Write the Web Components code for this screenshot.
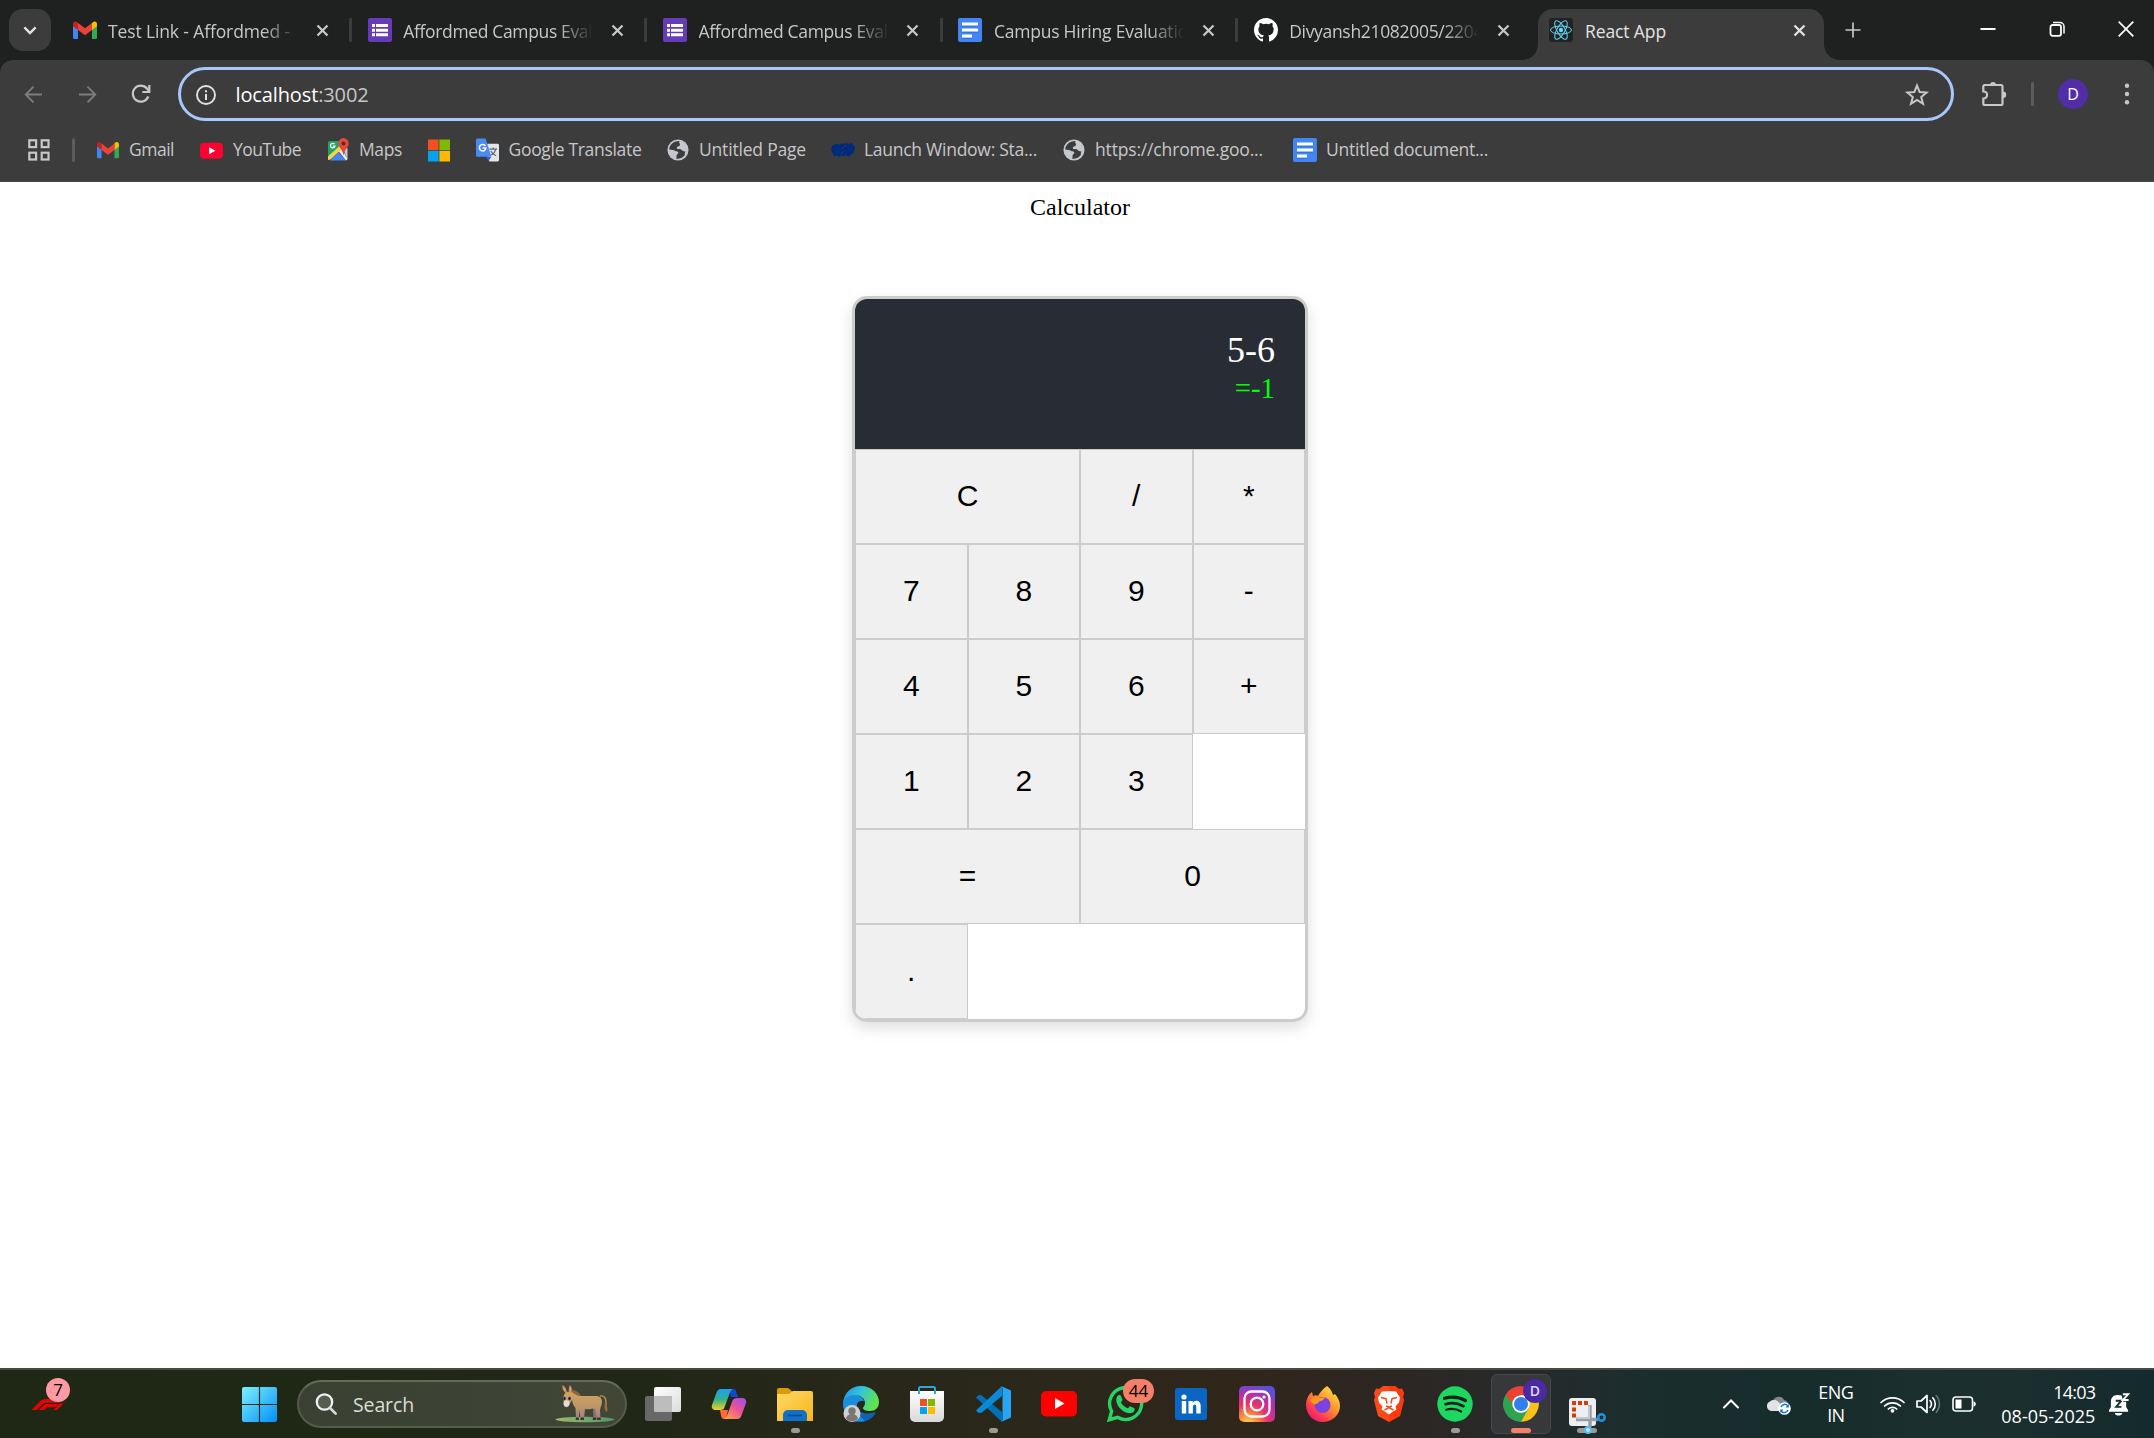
<!DOCTYPE html>
<html lang="en">
<head>
<meta charset="utf-8">
<title>React App</title>
<style>
html,body{margin:0;height:1438px;overflow:hidden;background:#fff}
body{display:flex;flex-direction:column;width:2154px;font-family:"Open Sans","Noto Sans",sans-serif}
calc-page{flex:1}
</style>
</head>
<body>
<tab-strip>
  <browser-tab icon="gmail" w="182">Test Link - Affordmed -</browser-tab>
  <browser-tab icon="forms" w="189">Affordmed Campus Eval</browser-tab>
  <browser-tab icon="forms" w="189">Affordmed Campus Eval</browser-tab>
  <browser-tab icon="docs" w="194">Campus Hiring Evaluatio</browser-tab>
  <browser-tab icon="github" w="194" last>Divyansh21082005/2204</browser-tab>
  <browser-tab icon="react" w="81" active>React App</browser-tab>
</tab-strip>
<tool-bar></tool-bar>
<bookmarks-bar></bookmarks-bar>
<calc-page></calc-page>
<task-bar></task-bar>

<script>
const GMAIL='<path fill="#4285f4" d="M0 4v12.5A1.5 1.5 0 0 0 1.5 18H5V7z"/><path fill="#34a853" d="M24 4v12.5a1.5 1.5 0 0 1-1.5 1.5H19V7z"/><path fill="#fbbc04" d="M19 2v7l5-3.800V3c0-2.700-2.900-3.700-5-1z"/><path fill="#c5221f" d="M0 3v2.200L5 9V2C3-.7 0 .3 0 3z"/><path fill="#ea4335" d="M5 2v7l7 5.300L19 9V2l-7 5.300z"/>';
const CLOSE='<path d="M2 2l8 8M10 2l-8 8" stroke="currentColor" stroke-width="1.800" fill="none"/>';
const GLOBE='<circle cx="12" cy="12" r="11.500" fill="#c4c7cc"/><path fill="#3c3c3c" d="M2.500 11.500c3 .2 5 .5 6.500 1.500 1.400 1 3.200.2 3.400 1.800.2 1.700-1.900 1.800-2 3.200-.1 1.200.2 2.400-.4 3.500 3.500.5 6.500-.6 8.800-3.100 1.200-1.400.2-3.400 1.400-4.900-2.200.3-3.700-1-5.200-2.300-1.700-.5-3.500.5-4.300-1-.6-1.400.9-2.200 2-2.400 1.700-.4 1.800-2.300.9-3.300-.6-.8-.3-1.800.3-2.200C8.500 2 2.500 5.500 2.500 11.500z"/>';
const DOCS='<rect width="24" height="24" rx="2" fill="#4285f4"/><path fill="#fff" d="M4 4.500h16v3.200H4zM4 10.500h16v3.200H4zM4 16.600h10v3.200H4z"/><path d="M4 8.200h16M4 14.200h16M4 20.300h10" stroke="#2f6fdf"/>';
const YT='<rect y="4" width="24" height="16.500" rx="4" fill="#f03"/><path fill="#fff" d="M9.500 8.500v7.500l6.500-3.750z"/>';
const ICONS={
 gmail:['0 -3 24 24',GMAIL],
 x:['0 0 12 12',CLOSE],
 forms:['0 0 24 24','<rect width="24" height="24" rx="2" fill="#673ab7"/><path fill="#fff" d="M4 6h3v3H4zM8 6h12v3H8zM4 10.700h3v3H4zM8 10.700h12v3H8zM4 15.300h3v3H4zM8 15.300h12v3H8z"/>'],
 docs:['0 0 24 24',DOCS],
 github:['0 0 16 16','<path fill="#fff" d="M8 0C3.580 0 0 3.580 0 8c0 3.540 2.290 6.530 5.470 7.590.4.070.55-.17.55-.38 0-.19-.01-.82-.01-1.490-2.010.37-2.530-.49-2.690-.94-.09-.23-.48-.94-.82-1.130-.28-.15-.68-.52-.01-.53.63-.01 1.080.58 1.230.82.72 1.210 1.870.87 2.330.66.070-.52.280-.87.510-1.070-1.780-.2-3.640-.89-3.640-3.950 0-.87.310-1.590.820-2.150-.08-.2-.36-1.020.08-2.120 0 0 .67-.21 2.200.82a7.600 7.600 0 0 1 4 0c1.530-1.040 2.200-.82 2.200-.82.44 1.100.16 1.920.08 2.120.51.56.82 1.270.82 2.150 0 3.070-1.870 3.750-3.650 3.950.29.25.54.73.54 1.480 0 1.070-.01 1.930-.01 2.200 0 .21.15.46.55.38A8.010 8.010 0 0 0 16 8c0-4.420-3.580-8-8-8z"/>'],
 react:['0 0 24 24','<rect width="24" height="24" rx="3" fill="#222"/><g fill="none" stroke="#61dafb" stroke-width="1"><ellipse cx="12" cy="12" rx="10.500" ry="4"/><ellipse cx="12" cy="12" rx="10.500" ry="4" transform="rotate(60 12 12)"/><ellipse cx="12" cy="12" rx="10.500" ry="4" transform="rotate(120 12 12)"/></g><circle cx="12" cy="12" r="2.200" fill="#61dafb"/>'],
 down:['0 0 12 12','<path d="M1.200 3.800L6 8.600l4.800-4.800" stroke="currentColor" stroke-width="2" fill="none"/>'],
 plus:['0 0 16 16','<path d="M8 .5v15M.5 8h15" stroke="currentColor" stroke-width="1.700"/>'],
 min:['0 0 16 16','<path d="M.5 8h15" stroke="#fff" stroke-width="2"/>'],
 restore:['0 0 16 16','<rect x="1.500" y="4" width="10.500" height="10.800" rx="2" fill="none" stroke="#fff" stroke-width="1.800"/><path d="M4 1.500h7A4 4 0 0 1 15 5.500v7" fill="none" stroke="#fff" stroke-width="1.500"/>'],
 wclose:['0 0 16 16','<path d="M.7.7l14.600 14.600M15.300.7L.7 15.300" stroke="#fff" stroke-width="1.700"/>'],
 back:['0 0 20 20','<path d="M19 10H2.500M10 1.800L1.800 10l8.200 8.200" fill="none" stroke="currentColor" stroke-width="1.900"/>'],
 fwd:['0 0 20 20','<path d="M1 10h16.500M10 1.800l8.200 8.200-8.200 8.200" fill="none" stroke="currentColor" stroke-width="1.900"/>'],
 reload:['0 0 20 20','<path d="M17.300 12.500a8 8 0 1 1-1.300-8L18 7" fill="none" stroke="currentColor" stroke-width="2.200"/><path d="M18.300 1v7h-7" fill="none" stroke="currentColor" stroke-width="2.200"/>'],
 info:['0 0 20 20','<circle cx="10" cy="10" r="9" fill="none" stroke="currentColor" stroke-width="1.900"/><path d="M10 9v6M10 5.300v2" stroke="currentColor" stroke-width="2"/>'],
 star:['0 0 24 24','<path d="M12 2.500l2.600 6.500 7 .5-5.400 4.500 1.800 6.800-6-3.800-6 3.800 1.800-6.800L2.400 9.500l7-.5z" fill="none" stroke="currentColor" stroke-width="2"/>'],
 puzzle:['0 0 26 26','<path d="M4 4h16a1.500 1.500 0 0 1 1.500 1.500v17A1.500 1.500 0 0 1 20 24H3.800a1.500 1.500 0 0 1-1.500-1.500V17.500c5 0 5-7 0-7V5.500A1.500 1.500 0 0 1 4 4z" fill="none" stroke="currentColor" stroke-width="2.200"/><path d="M9 4a3 3 0 0 1 6 0zM22 10.500a3 3 0 0 1 0 6.500z" fill="currentColor"/>'],
 dots:['0 0 8 24','<circle cx="4" cy="3.800" r="2.200" fill="currentColor"/><circle cx="4" cy="12" r="2.200" fill="currentColor"/><circle cx="4" cy="20.200" r="2.200" fill="currentColor"/>'],
 apps:['0 0 22 22','<g fill="none" stroke="#c7c7c7" stroke-width="2.200"><rect x="1.300" y="1.300" width="6.800" height="6.800"/><rect x="13.700" y="1.300" width="6.800" height="6.800"/><rect x="1.300" y="13.700" width="6.800" height="6.800"/><rect x="13.700" y="13.700" width="6.800" height="6.800"/></g>'],
 youtube:['0 0 24 24',YT],
 maps:['0 0 22 24','<path fill="#1fa463" d="M2.500 3H15L14 11 2 21.500a1.500 1.500 0 0 1-1-1.500V4.500A1.500 1.500 0 0 1 2.500 3z"/><path fill="#fbd14b" d="M1 18.500L13.500 7l2.500 3L3.500 21.500 1 22z"/><path fill="#4285f4" d="M3 22.500l8.500-8.200L19 22.500z"/><path fill="#e6e8ea" d="M11.800 13.500l3-2.500 5.700 9.500a2 2 0 0 1-1.500 2z"/><path fill="#c3c8cd" d="M16 11l4.500-1v11z"/><path fill="#dd4b3e" d="M16.500 0a5.300 5.300 0 0 0-5.200 5.500c0 4 4.200 5 5.200 12 1-7 5.200-8 5.200-12A5.300 5.300 0 0 0 16.500 0z"/><circle cx="16.500" cy="5.400" r="2" fill="#7c1d17"/><path d="M7.600 6.200A2.300 2.300 0 1 0 8 8.200H5.800" fill="none" stroke="#fff" stroke-width="1.300"/>'],
 ms:['0 0 24 24','<path fill="#f25022" d="M0 0h11.600v11.600H0z"/><path fill="#7fba00" d="M12.400 0H24v11.600H12.400z"/><path fill="#00a4ef" d="M0 12.400h11.600V24H0z"/><path fill="#ffb900" d="M12.400 12.400H24V24H12.400z"/>'],
 translate:['0 0 24 24','<path fill="#e3e5e8" d="M9 5.500h13.500A1.500 1.500 0 0 1 24 7v15.500a1.500 1.500 0 0 1-1.500 1.500H14z"/><path d="M14 11h8M18 9.500V11M20.500 11c-.5 3-3 5.500-5.500 6.500M15.500 13c1 2.200 3 4 5.500 5" stroke="#5f6b78" stroke-width="1.300" fill="none"/><path fill="#3a5bbf" d="M10 19h6l-3 4.500z"/><path fill="#4a8af4" d="M1.500 0H10l6 19H1.500A1.500 1.500 0 0 1 0 17.500v-16A1.500 1.500 0 0 1 1.500 0z"/><path d="M9.800 7.800A3.400 3.400 0 1 0 10.300 10H7" fill="none" stroke="#fff" stroke-width="1.500"/>'],
 globe:['0 0 24 24',GLOBE],
 launch:['0 0 24 14','<path fill="#002b7a" d="M0 7l1-4 4-2.500 2.500 1.200L12 .3l1 .7L15.500 0l1.500 1L21 0l3 4-1 5-5 4.500-3-1-3 .5-1-.5L8 14l-2-1.500-3 .5z"/><path stroke="#3c3c3c" stroke-width=".9" d="M10.500 6.500L15 2M9.500 11.500l4-4" fill="none"/>'],
 f1:['0 0 35 12','<path fill="#e10600" d="M0 12L9 3c2-2 3.500-3 7-3h19L31 4H17c-2.500 0-3.500.5-5 2l-6 6z"/><path fill="#e10600" d="M8 12l5-5c1-1 2-1.500 4-1.500h13L26.500 9H19c-1.500 0-2 .2-3 1l-2 2zM24 12l7-7h4l-7 7z"/>'],
 win:['0 0 35 35','<defs><linearGradient id="g" x2="1" y2="1"><stop stop-color="#7df0ff"/><stop offset="1" stop-color="#0090f8"/></linearGradient></defs><path fill="url(#g)" d="M2 0h14.900v16.900H0V2a2 2 0 0 1 2-2zM18.100 0H33a2 2 0 0 1 2 2v14.900H18.100zM0 18.100h16.900V35H2a2 2 0 0 1-2-2zM18.100 18.100H35V33a2 2 0 0 1-2 2H18.100z"/>'],
 search:['0 0 22 22','<circle cx="9.500" cy="9" r="7.700" fill="#6b6f62" fill-opacity=".6" stroke="#f1f1f1" stroke-width="2.300"/><path d="M15 15l5.700 5.700" stroke="#d8dae0" stroke-width="2.600" stroke-linecap="round"/>'],
 donkey:['0 0 60 38','<defs><linearGradient id="b" x2="0" y2="1"><stop stop-color="#d3a45c"/><stop offset=".55" stop-color="#bd9668"/><stop offset="1" stop-color="#9a8084"/></linearGradient><linearGradient id="l" x2="1"><stop stop-color="#9dba68"/><stop offset="1" stop-color="#4f9670"/></linearGradient></defs><ellipse cx="30" cy="34.500" rx="29.500" ry="2.800" fill="url(#l)"/><path d="M45 11c6-1 6 4 6 10" fill="none" stroke="#c08c4c" stroke-width="1.400"/><path fill="#a66a35" d="M50 18c2 2 3 5 2 9-3-2-3-6-2-9z"/><path fill="#8a7278" d="M25 22h4v12h-3.500zM38 21h4v13h-3.500z"/><path fill="url(#b)" d="M18 6c3 3 5 5 9 5h14c4 0 6 2 6 6 0 3-1.500 5-2 8l.5 9H42l-1.500-9c-.5-1-1-1.500-2-1.500-4 1-6 1-8.500.5L29 34h-3.500l-1-9c0 3-.5 6-1 9H21l-.5-11c-2-2-3-5-3.500-8-1 2-2.500 4-4 6.500-1.500 1.500-4 .5-4-1.500 0-3-.5-4-.5-7 0-3 1-5 3-6z"/><path fill="#c08f5c" d="M10.500 8C8 6 7 3 7.500 0 10 1.500 11.500 4 12 7.500zM14 7c-.6-3 0-5 .8-7C17 2 17.500 5 16.500 8z"/><path fill="#ee9886" d="M10.700 6.500C9 5 8.300 3.500 8.200 1.700c1.500 1.300 2.400 3 2.500 4.800zM15 6c-.3-2 0-3.300.4-4.500 1 1.500 1 3 .4 4.500z"/><path fill="#8d6238" d="M16.500 4.500c4 .5 8 3 9.500 6.500-3 0-6-1.500-9-4z"/><ellipse cx="11.500" cy="18.500" rx="3" ry="3.300" fill="#e8dbd4"/><ellipse cx="9.600" cy="13.500" rx="1.100" ry="1.700" fill="#1d1f74"/><ellipse cx="14.500" cy="13.500" rx="1.300" ry="1.800" fill="#1d1f74"/><path fill="#46302c" d="M20.800 32.500h3V35h-3zM25.500 32.500H29V35h-3.500zM37.800 32.500h3.400V35h-3.400zM42.200 32.500h3.500V35h-3.500z"/>'],
 taskview:['0 0 36 34','<defs><linearGradient id="w" x2="1" y2="1"><stop stop-color="#fff"/><stop offset="1" stop-color="#dcdcdc"/></linearGradient></defs><rect y="9" width="27" height="25" rx="2" fill="#686868"/><rect x="9" width="27" height="25" rx="2" fill="url(#w)"/><path fill="#bdbdbd" d="M9 9h18v16H11a2 2 0 0 1-2-2z"/>'],
 copilot:['0 0 34 30','<defs><linearGradient id="a" x2="0" y2="1"><stop stop-color="#1aa0f5"/><stop offset=".5" stop-color="#37b08c"/><stop offset="1" stop-color="#f5cf1c"/></linearGradient><linearGradient id="c" x1="1" x2=".2" y2="1"><stop stop-color="#9a4df0"/><stop offset=".5" stop-color="#e8509a"/><stop offset="1" stop-color="#ff9a4a"/></linearGradient></defs><path fill="#1546cf" d="M17 0h4c3 0 3 2 4 5l1.500 3H19z"/><path fill="url(#a)" d="M9 0h12c-2 1-3 3-4 6l-4 11c-1 3-2 4-5 4H4c-3 0-5-2-4-5l4-11c1-3 2-5 5-5z"/><path fill="#ff6a3a" d="M8 21h8l-2 9h-2c-3 0-3-4-4-9z"/><path fill="url(#c)" d="M25 30H12c2-1 3-3 4-6l4-11c1-3 2-4 5-4h5c3 0 5 2 4 5l-4 11c-1 3-2 5-5 5z"/>'],
 folder:['0 0 36 33','<defs><linearGradient id="a" x2="1" y2="1"><stop stop-color="#ffd968"/><stop offset="1" stop-color="#f7b51c"/></linearGradient></defs><path fill="#dc9b06" d="M0 2a2 2 0 0 1 2-2h9l5 4v6H0z"/><path fill="url(#a)" d="M0 6h12l4-3h18a2 2 0 0 1 2 2v28H0z"/><path fill="#1270c8" d="M6 33v-6a5 5 0 0 1 5-5h14a5 5 0 0 1 5 5v6z"/><path stroke="#0a4a92" stroke-width="1.600" d="M11 27.500h14"/>'],
 edge:['0 0 36 36','<defs><linearGradient id="a" x2="1" y2=".4"><stop stop-color="#1b8fe8"/><stop offset=".5" stop-color="#33c4dc"/><stop offset="1" stop-color="#60e34f"/></linearGradient></defs><path fill="#0f63b5" d="M0 17c1-7 8-10 14-8 3 1 6 3 7 6-5-1-8 2-7 6 1 6 10 8 19 5-3 7-10 10-17 10C6 36 0 28 0 17z"/><path fill="#1b8ddb" d="M0 17c1-7 8-10 14-8 3 1 6 3 7 6-5-1-8 2-7 6 0 5 4 10 8 14C8 38 0 28 0 17z"/><path fill="url(#a)" d="M0 17C1 7 8 0 18 0c11 0 18 8 18 16 0 6-4 9-9 9-4 0-7-1-7-3 0-1 2-2 2-5 0-5-5-8-10-8C6 9 1 12 0 17z"/><circle cx="9" cy="27.500" r="8.500" fill="#d2d0ce"/><circle cx="9" cy="25" r="3.700" fill="#7a7672"/><path fill="#7a7672" d="M3 33a5.500 4.500 0 0 1 12 0 9 9 0 0 1-12 0z"/>'],
 store:['0 0 36 36','<defs><linearGradient id="a" x2="0" y2="1"><stop stop-color="#fff"/><stop offset="1" stop-color="#d9d9d9"/></linearGradient></defs><path fill="url(#a)" d="M1 5h34v26a5 5 0 0 1-5 5H6a5 5 0 0 1-5-5z"/><path d="M10 8V2.500A1.500 1.500 0 0 1 11.500 1h13A1.500 1.500 0 0 1 26 2.500V8" fill="none" stroke="#2ba9dc" stroke-width="2"/><path fill="#f25022" d="M11 13h7v7h-7z"/><path fill="#7fba00" d="M19 13h7v7h-7z"/><path fill="#00a4ef" d="M11 21h7v7h-7z"/><path fill="#ffb900" d="M19 21h7v7h-7z"/>'],
 vscode:['0 0 36 36','<path fill="#0070b8" d="M1 11.500L3.500 9l3 .2L27 26v10z"/><path fill="#0a8bd8" d="M1 24.500L3.500 27l3-.2L27 10V0z"/><path fill="#27a4f2" d="M26 0l10 4.500v27L26 36c1.500-1 1.500-2 1.500-3V3c0-1 0-2-1.500-3z"/>'],
 ytbig:['0 0 36 26','<rect width="36" height="25.500" rx="5" fill="#f00"/><path fill="#fff" d="M14 7v11l9.500-5.500z"/>'],
 whatsapp:['0 0 36 36','<path fill="none" stroke="#25d366" stroke-width="3.400" d="M2.300 33.700l2.300-8.500A16 16 0 1 1 10.500 31.300z"/><path fill="#25d366" d="M12 9c1 0 1.500 0 2 1l1.500 3.500c.3 1-1.500 2.300-1.500 3 1.500 3 4 4.700 6.500 5.700 1 .2 2-2.200 2.800-2l4 2c.8.600.3 3-1 4-2.300 1.700-6 1.200-9.300-.7C13 23.500 8 17 9.500 12c.4-1.500 1.500-3 2.500-3z"/>'],
 linkedin:['0 0 32 32','<rect width="32" height="32" rx="2.500" fill="#0a66c2"/><circle cx="9" cy="9" r="2.600" fill="#fff"/><path fill="#fff" d="M6.800 13h4.400v12.500H6.800zM13.500 13h4.200v1.800c2-3.300 8-2.800 8 3.200v7.500h-4.400v-6.500c0-3.500-3.400-3-3.400 0v6.500h-4.400z"/>'],
 instagram:['0 0 36 36','<defs><radialGradient id="a" cx=".25" cy="1.050" r="1.100"><stop stop-color="#fdd45a"/><stop offset=".25" stop-color="#fb8b3c"/><stop offset=".5" stop-color="#e8336a"/><stop offset=".75" stop-color="#b82fa8"/><stop offset="1" stop-color="#5b4fd8"/></radialGradient></defs><rect width="36" height="36" rx="5" fill="url(#a)"/><rect x="5.500" y="5.500" width="25" height="25" rx="7" fill="none" stroke="#fff" stroke-width="2.300"/><circle cx="18" cy="18" r="6.300" fill="none" stroke="#fff" stroke-width="2.300"/><circle cx="25" cy="11" r="1.600" fill="#fff"/>'],
 firefox:['0 0 36 36','<defs><linearGradient id="a" x1="1" x2=".2" y2="1"><stop stop-color="#fff44f"/><stop offset=".45" stop-color="#ff9a2b"/><stop offset=".8" stop-color="#ff3750"/><stop offset="1" stop-color="#e31587"/></linearGradient></defs><path fill="url(#a)" d="M22 0c4 3 5 6 6 9l2-1c3 4 5 7 5 12 0 9-8 16-17.500 16S1 28 1 19c0-5 2-10 6-13l1 4c2-1 4-1 5 0 2-4 6-8 9-10z"/><circle cx="17.500" cy="19" r="8" fill="#7a43e0"/><path fill="#ff9a1f" d="M5 14c4-3 8-3 10-2 1 0 3-1 5-1-1 2-2 4-5 4-2 1-1 2-4 3-2 1-4-1-6-4z"/>'],
 brave:['0 0 32 36','<path fill="#fb4a1a" d="M10 0h12l4 3 3-.5L31 7l-1 4 1 3-4 16-11 6-11-6L1 14l1-3-1-4 2-4.500L6 3z"/><path fill="#ff2a00" d="M16 0h6l4 3 3-.5L31 7l-1 4 1 3-4 16-11 6z" opacity=".5"/><path fill="#fff" d="M16 5l7 .5 4 6-1 5-3.500 4 1 3-3.500 2-4 3-4-3-3.500-2 1-3L6 16.500l-1-5 4-6z"/><path d="M8 11.500l5 1.200 1 5M24 11.500l-5 1.200-1 5M13 20l3 1 3-1M11.500 24l4.500-2.500 4.500 2.500" stroke="#fb4a1a" stroke-width="1.500" fill="none"/>'],
 spotify:['0 0 36 36','<circle cx="18" cy="18" r="17.700" fill="#1ed760"/><g fill="none" stroke="#16211b" stroke-linecap="round"><path d="M7.500 12.300c7-2 15-1.200 21 2.200" stroke-width="3.200"/><path d="M8.500 18.200c6-1.700 12.500-1 18 2" stroke-width="2.700"/><path d="M9.200 23.700c5-1.300 10.500-.8 15 1.800" stroke-width="2.200"/></g>'],
 chrome:['0 0 36 36','<path fill="#ea4335" d="M18 18L2.700 9A17.700 17.700 0 0 1 33.300 9z"/><path fill="#fbc116" d="M18 18V9h15.300A17.700 17.700 0 0 1 18 35.700z"/><path fill="#30a350" d="M18 18l7.500 4.500L18 35.700A17.700 17.700 0 0 1 2.700 9z"/><path fill="#ea4335" d="M2.700 9A17.700 17.700 0 0 1 18 .3V9l-8 9z"/><path fill="#30a350" d="M2.700 9l8 13 3 4L18 35.700A17.700 17.700 0 0 1 2.700 9z"/><circle cx="18" cy="18" r="8.700" fill="#fff"/><circle cx="18" cy="18" r="7" fill="#2f80ed"/>'],
 snip:['0 0 37 36','<rect width="27" height="28" rx="3" fill="#eceef2"/><path fill="#d83b01" d="M3 3h4v4H3zM9 3h4v4H9zM15 3h4v4h-4zM3 9.500h4v4H3zM3 15.500h4v4H3z"/><rect x="8" y="30" width="20" height="5" rx="2.500" fill="#999a9a"/><path fill="none" stroke="#8d96a0" stroke-width="3.500" d="M21 7v22M7 21.500h22" opacity=".9"/><path fill="none" stroke="#c3c9d0" stroke-width="2" d="M8 20h12V8"/><circle cx="32.500" cy="19.500" r="3.200" fill="none" stroke="#1c93dd" stroke-width="2.600"/><circle cx="19" cy="32" r="3" fill="#bfe6fa" stroke="#5cb8ea" stroke-width="2"/>'],
 up:['0 0 16 10','<path d="M1 8.500l7-7 7 7" fill="none" stroke="#fff" stroke-width="2" stroke-linecap="round"/>'],
 cloud:['0 0 25 20','<path fill="#7f8a89" d="M7 6a6 6 0 0 1 11-1 5.500 5.500 0 0 1 4 8H9z"/><path fill="#dfe3e3" d="M5 16a5 5 0 0 1-1-9.500C8 3 13 6 14 9l4 2v5z"/><circle cx="18.500" cy="13.500" r="6.300" fill="#fff"/><path d="M15 12a4 4 0 0 1 7-1M22 15a4 4 0 0 1-7 1" stroke="#1275cc" stroke-width="1.500" fill="none"/><path fill="#1275cc" d="M22.800 9v3.500h-3.300zM14.200 18v-3.500h3.300z"/>'],
 wifi:['0 0 25 18','<g fill="none" stroke="#fff" stroke-width="1.700" stroke-linecap="round"><path d="M1 7.500a16.500 16.500 0 0 1 23 0M4.600 11a11.400 11.400 0 0 1 15.800 0M8.300 14a6 6 0 0 1 8.400 0"/></g><circle cx="12.500" cy="15.800" r="1.900" fill="#fff"/>'],
 vol:['0 0 25 20','<path d="M1 7h4l6-5.500v17L5 13H1z" fill="none" stroke="#fff" stroke-width="1.700" stroke-linejoin="round"/><path d="M14 6.500c1.700 2 1.700 5 0 7M16.800 3.800c3.300 3.500 3.300 9 0 12.400" fill="none" stroke="#fff" stroke-width="1.600" stroke-linecap="round"/><path d="M19.800 1.200c4.800 5 4.800 12.500 0 17.600" fill="none" stroke="#667573" stroke-width="1.600"/>'],
 batt:['0 0 25 16','<rect x="1" y="1" width="19.500" height="14" rx="3" fill="none" stroke="#fff" stroke-width="1.600"/><path fill="#fff" d="M3.500 3.500h6v9h-6zM21.500 5.500c3 0 3 5 0 5z"/>'],
 bell:['0 0 22 24','<path fill="#fff" d="M8.500 2C4.500 2 2 5 2 9v5.500L0 18v1.500h20V18l-2-3.500V9l-4-6.500zM6 20.800h8c-1 3.600-7 3.600-8 0z"/><path d="M7 8h6l-5.500 6.500H13" fill="none" stroke="#17302f" stroke-width="2"/><path fill="#17302f" d="M12.500 0H22v9h-7z"/><path d="M14.500 1.300h5.500l-5.500 6h6" fill="none" stroke="#fff" stroke-width="2"/>']
};

class UiIcon extends HTMLElement{
  connectedCallback(){
    if(this.shadowRoot)return;
    const [vb,body]=ICONS[this.getAttribute('name')];
    const w=this.getAttribute('w'),h=this.getAttribute('h')||w;
    this.attachShadow({mode:'open'}).innerHTML=`<style>:host{display:block;flex:none;width:${w}px;height:${h}px}svg{display:block;overflow:visible}</style><svg width="${w}" height="${h}" viewBox="${vb}">${body}</svg>`;
  }
}
customElements.define('ui-icon',UiIcon);

/* Single-line label whose tracking is adjusted so that it occupies the width in "w". */
class FitText extends HTMLElement{
  connectedCallback(){
    if(this.shadowRoot)return;
    this.attachShadow({mode:'open'}).innerHTML='<style>:host{display:block;flex:none;white-space:pre}span{display:inline-block}</style><span><slot></slot></span>';
    const s=this.shadowRoot.querySelector('span'),w=+this.getAttribute('w');
    const d=w-s.getBoundingClientRect().width;
    s.style.letterSpacing=(d/this.textContent.length)+'px';
  }
}
customElements.define('fit-text',FitText);

class BrowserTab extends HTMLElement{
  connectedCallback(){
    if(this.shadowRoot)return;
    const act=this.hasAttribute('active'),last=this.hasAttribute('last');
    const t=this.textContent;
    this.attachShadow({mode:'open'}).innerHTML=`<style>
    :host{display:flex;flex:none;width:295.300px;height:51px;box-sizing:border-box}
    .b{display:flex;align-items:center;width:100%;box-sizing:border-box;padding:0 0 9px 16.500px;color:#c7c7c7;font-size:17.500px;position:relative}
    .act{margin:0 4px 0 6px;padding-left:11px;background:#3c3c3c;border-radius:15px 15px 0 0;color:#e3e3e3}
    .act::before,.act::after{content:"";position:absolute;bottom:0;width:15px;height:15px}
    .act::before{left:-15px;background:radial-gradient(circle at 0 0,#0000 14.500px,#3c3c3c 15px)}
    .act::after{right:-15px;background:radial-gradient(circle at 100% 0,#0000 14.500px,#3c3c3c 15px)}
    .t{width:198px;margin-left:11.500px;line-height:24px;padding-top:2px}
    .fade{-webkit-mask-image:linear-gradient(90deg,#000 155px,#0000 190px);mask-image:linear-gradient(90deg,#000 155px,#0000 190px)}
    .x{margin-left:8.800px;display:flex}
    i{width:3px;height:24px;border-radius:1px;background:#3c3c3c;margin-left:auto;margin-right:-.8px}
    </style><div class="b ${act?'act':''}"><ui-icon name="${this.getAttribute('icon')}" w="24"></ui-icon><div class="t ${act?'':'fade'}"><fit-text w="${this.getAttribute('w')}">${t}</fit-text></div><div class="x"><ui-icon name="x" w="15"></ui-icon></div>${act||last?'':'<i></i>'}</div><slot style="display:none"></slot>`;
  }
}
customElements.define('browser-tab',BrowserTab);

const define=(name,html)=>customElements.define(name,class extends HTMLElement{
  connectedCallback(){ if(!this.shadowRoot)this.attachShadow({mode:'open'}).innerHTML=html; }
});

define('tab-strip',`<style>
:host{display:flex;height:60px;box-sizing:border-box;padding-top:9px;background:#1f2020;color:#c7c7c7}
.m{width:42px;height:42px;border-radius:14px;background:#3c3c3c;margin:0 5px 0 9px;display:flex;align-items:center;justify-content:center;color:#e3e3e3;flex:none}
.p{margin:13px 0 0 17.200px}
.w{display:flex;gap:53px;margin:12.200px 0 0 118.800px}
</style><div class="m"><ui-icon name="down" w="14"></ui-icon></div><slot></slot>
<div class="p"><ui-icon name="plus" w="16"></ui-icon></div>
<div class="w"><ui-icon name="min" w="16"></ui-icon><ui-icon name="restore" w="16"></ui-icon><ui-icon name="wclose" w="16"></ui-icon></div>`);

define('tool-bar',`<style>
:host{display:block;background:#1f2020;height:63px}
.r{display:flex;align-items:center;height:63px;box-sizing:border-box;padding:7px 0 2px 24px;background:#3c3c3c;border-radius:13px 13px 0 0;color:#c7c7c7}
.d{color:#7d7d7d}
.o{display:flex;align-items:center;box-sizing:border-box;width:1776px;height:54px;border:3px solid #a8c7fa;border-radius:27px;margin-left:27px;padding:2px 22px 0 14.500px;color:#c7c7c7;font-size:20px}
.o fit-text{margin-left:20px;line-height:26px}
b{font-weight:400;color:#fff}
.s{margin-left:auto}
i{width:3px;height:24px;border-radius:1.500px;background:#5c5c5c;margin-left:24px}
.a{width:30px;height:30px;border-radius:50%;background:#512da8;color:#fff;font-size:16px;line-height:30px;text-align:center;margin:0 0 0 24px}
</style><div class="r"><ui-icon class="d" name="back" w="19"></ui-icon><ui-icon class="d" name="fwd" w="19" style="margin-left:34.500px"></ui-icon><ui-icon name="reload" w="20" style="margin-left:34.500px"></ui-icon>
<div class="o"><ui-icon name="info" w="20" style="color:#e3e3e3"></ui-icon><fit-text w="133"><b>localhost</b>:3002</fit-text><ui-icon class="s" name="star" w="24"></ui-icon></div>
<ui-icon name="puzzle" w="26" style="margin-left:27px"></ui-icon><i></i><div class="a">D</div><ui-icon name="dots" w="8" h="24" style="margin-left:35px"></ui-icon></div>`);

const marks=[['gmail',22,22,97,129,45,'Gmail'],['youtube',23,23,200,233,68,'YouTube'],['maps',22,24,327,359,43,'Maps'],['ms',22,23,428,450,0,''],['translate',23,24,476,508.5,133,'Google Translate'],['globe',22,22,667,699,107,'Untitled Page'],['launch',24,14,831,864,173,'Launch Window: Sta...'],['globe',22,22,1063,1095,168,'https://chrome.goo...'],['docs',24,24,1293,1326,162,'Untitled document...']];
let edge=75,mh='';
for(const [n,w,h,x,tx,tw,t] of marks){
  mh+=`<div class="k" style="margin-left:${x-edge}px;gap:${tx-x-w}px"><ui-icon name="${n}" w="${w}" h="${h}"></ui-icon>${t?`<fit-text w="${tw}">${t}</fit-text>`:''}</div>`;
  edge=tx+tw;
}
define('bookmarks-bar',`<style>
:host{display:flex;align-items:center;height:59px;box-sizing:border-box;padding:0 0 4px 28px;background:#3c3c3c;border-bottom:1px solid #474747;color:#c7c7c7;font-size:17.500px}
.k{display:flex;align-items:center;line-height:24px}
.k fit-text{margin-top:-2px}
i{width:3px;height:24px;border-radius:1.500px;background:#5c5c5c;margin-left:22px}
</style><ui-icon name="apps" w="22"></ui-icon><i></i>${mh}`);

customElements.define('calc-key',class extends HTMLElement{
  connectedCallback(){
    if(this.shadowRoot)return;
    this.attachShadow({mode:'open'}).innerHTML=`<style>:host{display:flex;${this.hasAttribute('wide')?'grid-column:span 2;':''}align-items:center;justify-content:center;box-sizing:border-box;border:1px solid #ccc;padding-bottom:2px;background:#f0f0f0;font:30px "Liberation Sans",Arial,sans-serif;color:#000}</style><slot></slot>`;
  }
});
define('calc-page',`<style>
:host{display:flex;flex-direction:column;align-items:center;box-sizing:border-box;background:#fff;padding:11px 0 0 6px;font-family:"Liberation Serif","Times New Roman",serif;color:#000}
h1{font-size:24px;font-weight:400;line-height:28px;margin:0}
.c{width:450px;height:720px;border:3px solid #ccc;border-radius:15px;overflow:hidden;margin-top:75px;box-shadow:0 6px 15px rgba(0,0,0,.13);background:#fff}
.d{height:150px;box-sizing:border-box;padding:31px 30px 0;background:#282c34;color:#fff;text-align:right;font-size:36px;line-height:41px}
.r{font-size:28.800px;line-height:34px;color:#0f0}
.g{display:grid;grid-template-columns:repeat(4,1fr);grid-auto-rows:95px}
</style><h1>Calculator</h1><div class="c"><div class="d"><div>5-6</div><div class="r">=-1</div></div><div class="g">
<calc-key wide>C</calc-key><calc-key>/</calc-key><calc-key>*</calc-key>
<calc-key>7</calc-key><calc-key>8</calc-key><calc-key>9</calc-key><calc-key>-</calc-key>
<calc-key>4</calc-key><calc-key>5</calc-key><calc-key>6</calc-key><calc-key>+</calc-key>
<calc-key>1</calc-key><calc-key>2</calc-key><calc-key>3</calc-key><span></span>
<calc-key wide>=</calc-key><calc-key wide>0</calc-key><calc-key>.</calc-key></div></div>`);

const app=(n,w,h,x='',cls='')=>`<div class="a ${cls}"><ui-icon name="${n}" w="${w}" h="${h}"></ui-icon>${x}</div>`;
const dot='<i class="dot"></i>';
define('task-bar',`<style>
:host{display:flex;height:70px;box-sizing:border-box;border-top:2px solid #464b41;background:linear-gradient(90deg,#1f2815 0,#202716 620px,#27271a 850px,#2c271b 1100px,#30261a 1230px,#2b2725 1430px,#252a2b 1540px,#1b2d2d 1640px,#162d2c 1800px,#1c2f2e 2000px,#142a2e 2154px);color:#fff}
.f{position:relative;width:35px;margin:29px 0 0 30px}
.n{position:absolute;background:#ff99a4;color:#000;border-radius:12px;height:24px;line-height:23px;text-align:center;font-size:17px}
.win{margin:17px 0 0 177px}
.s{display:flex;align-items:center;width:330px;height:48px;box-sizing:border-box;margin:10px 0 0 20px;border:2px solid #565b4c;border-top-color:#656a5b;border-radius:24px;background:linear-gradient(90deg,#3a4132,#414637);padding:0 10px 0 16px;color:#dcdcd6;font-size:19.500px;flex:none}
.s fit-text{margin-left:16px}
.apps{display:flex;margin-left:3px}
.a{width:66px;height:68px;display:flex;align-items:center;justify-content:center;position:relative;flex:none}
.a>ui-icon{position:relative;z-index:1}
.dot{position:absolute;bottom:5px;left:28.500px;width:9px;height:5px;border-radius:2.500px;background:#9b9b95}
.on::before{content:"";position:absolute;left:3px;top:4px;width:58px;height:58px;border:1px solid #46484a;border-radius:6px;background:#363839}
.on .dot{width:20px;left:23px;background:#f4806a;z-index:2}
.snip{padding-top:24px;box-sizing:border-box}
.tray{display:flex;align-items:center;margin-left:102.800px;font-size:18px}
.l{display:flex;flex-direction:column;align-items:center;line-height:22.500px;margin-top:-1px}
.e{align-items:flex-end;line-height:24px}
</style>
<div class="f"><ui-icon name="f1" w="35" h="11"></ui-icon><span class="n" style="left:16px;top:-21px;width:24px">7</span></div>
<ui-icon class="win" name="win" w="35"></ui-icon>
<div class="s"><ui-icon name="search" w="22"></ui-icon><fit-text w="61">Search</fit-text><ui-icon name="donkey" w="60" h="38" style="margin-left:auto"></ui-icon></div>
<div class="apps">
${app('taskview',36,34)}${app('copilot',34,30)}${app('folder',36,33,dot)}${app('edge',36,36)}${app('store',36,36)}${app('vscode',36,36,dot)}${app('ytbig',36,26)}
${app('whatsapp',36,36,'<span class="n" style="left:31px;top:9px;width:31px;background:#f4806a;z-index:2">44</span>')}
${app('linkedin',32,32)}${app('instagram',36,36)}${app('firefox',36,36)}${app('brave',32,36)}${app('spotify',36,36,dot)}
${app('chrome',36,36,dot+'<span class="n" style="left:35px;top:9px;width:24px;background:#4a2aa3;color:#ddd6ff;font-size:14px;font-weight:600;z-index:2">D</span>','on')}
${app('snip',37,36,'','snip')}
</div>
<div class="tray"><ui-icon name="up" w="16" h="10"></ui-icon><ui-icon name="cloud" w="25" h="20" style="margin:2px 0 0 27px"></ui-icon>
<div class="l" style="margin-left:27.500px"><fit-text w="35">ENG</fit-text><fit-text w="17">IN</fit-text></div>
<ui-icon name="wifi" w="25" h="18" style="margin-left:27px"></ui-icon><ui-icon name="vol" w="25" h="20" style="margin-left:11px"></ui-icon><ui-icon name="batt" w="25" h="16" style="margin-left:11px"></ui-icon>
<div class="l e" style="margin-left:24px"><fit-text w="42">14:03</fit-text><fit-text w="94">08-05-2025</fit-text></div>
<ui-icon name="bell" w="21" h="23" style="margin-left:13.500px"></ui-icon></div>`);
</script>
</body>
</html>
